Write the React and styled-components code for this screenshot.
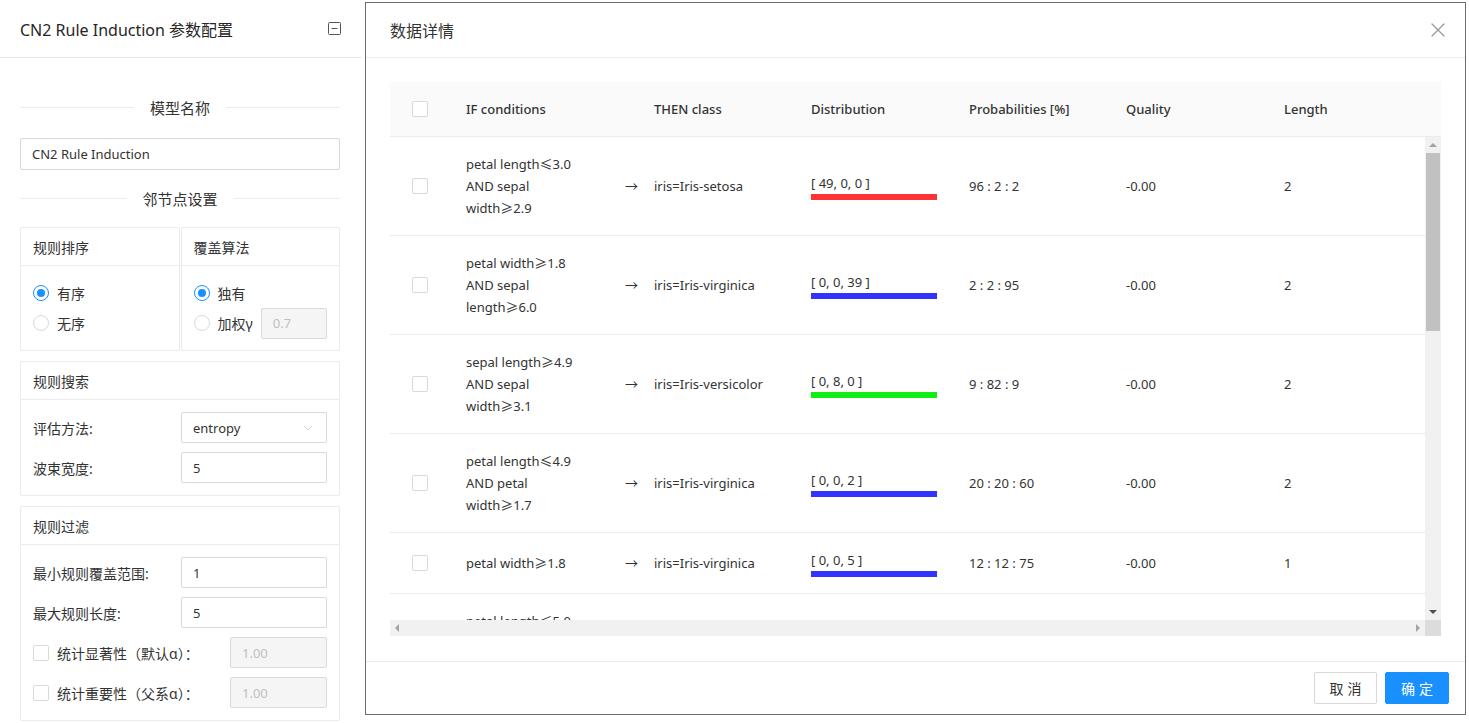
import React from "react";
import styled, { createGlobalStyle } from "styled-components";
import { ChevronDown, X } from "lucide-react";

const Global = createGlobalStyle`
  html, body { margin: 0; padding: 0; background: #fff; }
  body {
    font-family: "Noto Sans", "Noto Sans CJK SC", sans-serif;
    color: #333;
    font-size: 14px;
  }
  * { box-sizing: border-box; }
`;

const Page = styled.div`
  display: flex;
  align-items: flex-start;
  width: 1469px;
  height: 723px;
  overflow: hidden;
`;

/* ---------- left side panel ---------- */

const Side = styled.aside`
  width: 361px;
  flex-shrink: 0;
`;

const SideHeader = styled.div`
  height: 58px;
  padding: 0 20px;
  display: flex;
  align-items: center;
  justify-content: space-between;
  border-bottom: 1px solid #e8e8e8;
  font-size: 16px;
  color: #262626;
`;

const SideBody = styled.div`
  padding: 38px 20px 0 20px;
  width: 360px;
`;

const Divider = styled.div`
  display: flex;
  align-items: center;
  height: 22px;
  font-size: 15px;
  color: #333;
  margin-bottom: ${(p) => p.$mb || 0}px;
  &::before, &::after {
    content: "";
    flex: 1;
    border-top: 1px solid #ececec;
  }
  span { padding: 0 16px; }
`;

const Input = styled.div`
  height: ${(p) => p.$h || 32}px;
  width: ${(p) => (p.$w ? p.$w + "px" : "100%")};
  border: 1px solid #d9d9d9;
  border-radius: 2px;
  display: flex;
  align-items: center;
  justify-content: space-between;
  padding: 0 11px;
  font-size: 13px;
  color: ${(p) => (p.$disabled ? "#bfbfbf" : "#333")};
  background: ${(p) => (p.$disabled ? "#f5f5f5" : "#fff")};
  flex-shrink: 0;
  margin-bottom: ${(p) => p.$mb || 0}px;
`;

const CardPair = styled.div`
  display: flex;
  gap: 1px;
  margin-bottom: 10px;
`;

const Card = styled.div`
  flex: 1;
  border: 1px solid #ebebeb;
  border-radius: 2px;
  margin-bottom: ${(p) => p.$mb || 0}px;
`;

const CardHead = styled.div`
  height: 38px;
  padding: 0 12px;
  display: flex;
  align-items: center;
  border-bottom: 1px solid #ebebeb;
  font-size: 14px;
  color: #333;
`;

const CardBody = styled.div`
  padding: 12px;
  display: flex;
  flex-direction: column;
  gap: ${(p) => p.$gap || 0}px;
`;

const OptRow = styled.div`
  height: 30px;
  display: flex;
  align-items: center;
  font-size: 14px;
  gap: 8px;
`;

const Radio = styled.span`
  width: 16px;
  height: 16px;
  border-radius: 50%;
  border: 1px solid ${(p) => (p.$on ? "#1890ff" : "#d9d9d9")};
  display: inline-flex;
  align-items: center;
  justify-content: center;
  flex-shrink: 0;
  &::after {
    content: "";
    width: 8px;
    height: 8px;
    border-radius: 50%;
    background: ${(p) => (p.$on ? "#1890ff" : "transparent")};
  }
`;

const Check = styled.span`
  width: 16px;
  height: 16px;
  border: 1px solid #d9d9d9;
  border-radius: 2px;
  background: #fff;
  display: inline-block;
  flex-shrink: 0;
`;

const FormRow = styled.div`
  display: flex;
  align-items: center;
  justify-content: space-between;
  font-size: 14px;
`;

const CheckLabel = styled.div`
  display: flex;
  align-items: center;
  gap: 8px;
`;

/* ---------- modal ---------- */

const Modal = styled.section`
  margin: 2px 0 0 4px;
  width: 1101px;
  height: 713px;
  border: 1px solid #6b6b6b;
  background: #fff;
  display: flex;
  flex-direction: column;
`;

const ModalHead = styled.div`
  height: 55px;
  padding: 0 15px 0 24px;
  display: flex;
  align-items: center;
  justify-content: space-between;
  border-bottom: 1px solid #ebebeb;
  font-size: 16px;
  color: #333;
  span { margin-top: -1px; }
`;

const ModalBody = styled.div`
  padding: 24px 23px 24px 24px;
  flex: 1;
`;

const ModalFoot = styled.div`
  border-top: 1px solid #ebebeb;
  padding: 10px 16px;
  display: flex;
  justify-content: flex-end;
  gap: 8px;
`;

const Button = styled.button`
  height: 32px;
  width: ${(p) => p.$w}px;
  border-radius: 2px;
  font-family: inherit;
  font-size: 14px;
  letter-spacing: 4px;
  padding: 0 0 0 4px;
  border: 1px solid ${(p) => (p.$primary ? "#1890ff" : "#d9d9d9")};
  background: ${(p) => (p.$primary ? "#1890ff" : "#fff")};
  color: ${(p) => (p.$primary ? "#fff" : "#333")};
`;

const COLS = "60px 164px 24px 157px 158px 157px 158px 157px";

const Table = styled.div`
  width: 1051px;
`;

const HeadRow = styled.div`
  display: grid;
  grid-template-columns: ${COLS} 16px;
  height: 55px;
  background: #fafafa;
  border-bottom: 1px solid #ebebeb;
  font-size: 13px;
  font-weight: 500;
  color: #333;
`;

const Cell = styled.div`
  display: flex;
  align-items: center;
  justify-content: ${(p) => (p.$center ? "center" : "flex-start")};
  padding: ${(p) => (p.$center ? "0" : p.$pad || "0 16px")};
  line-height: 22px;
`;

const ScrollGrid = styled.div`
  display: grid;
  grid-template-columns: 1035px 16px;
  grid-template-rows: 483px 16px;
`;

const Viewport = styled.div`
  overflow: hidden;
`;

const Row = styled.div`
  display: grid;
  grid-template-columns: ${COLS};
  padding: 16px 0;
  border-bottom: 1px solid #ebebeb;
  font-size: 13px;
  color: #333;
`;

const Lines = styled.div`
  display: flex;
  flex-direction: column;
`;

const Dist = styled.div`
  display: flex;
  flex-direction: column;
  width: 126px;
  span { line-height: 22px; }
  i {
    display: block;
    height: 6px;
    background: ${(p) => p.$color};
  }
`;

const VBar = styled.div`
  background: #f1f1f1;
  display: flex;
  flex-direction: column;
`;

const HBar = styled.div`
  background: #f1f1f1;
  display: flex;
  justify-content: space-between;
  align-items: center;
  padding: 0 5px;
`;

const Corner = styled.div`
  background: #dcdcdc;
`;

const ArrowBtn = styled.div`
  height: 16px;
  display: flex;
  align-items: center;
  justify-content: center;
  &::after {
    content: "";
    width: 0;
    height: 0;
    border-left: 4px solid transparent;
    border-right: 4px solid transparent;
    ${(p) => (p.$dir === "up" ? "border-bottom: 4px solid #a3a3a3;" : "border-top: 4px solid #505050;")}
  }
`;

const HArrow = styled.span`
  width: 0;
  height: 0;
  border-top: 4px solid transparent;
  border-bottom: 4px solid transparent;
  ${(p) => (p.$dir === "left" ? "border-right: 4px solid #a3a3a3;" : "border-left: 4px solid #a3a3a3;")}
`;

const Thumb = styled.div`
  height: 178px;
  margin: 0 1px;
  background: #c1c1c1;
`;

const Spacer = styled.div`
  flex: 1;
`;

const rules = [
  { cond: ["petal length≤3.0", "AND sepal", "width≥2.9"], cls: "iris=Iris-setosa", dist: "[ 49, 0, 0 ]", color: "#ff3333", prob: "96 : 2 : 2", q: "-0.00", len: "2" },
  { cond: ["petal width≥1.8", "AND sepal", "length≥6.0"], cls: "iris=Iris-virginica", dist: "[ 0, 0, 39 ]", color: "#3333ff", prob: "2 : 2 : 95", q: "-0.00", len: "2" },
  { cond: ["sepal length≥4.9", "AND sepal", "width≥3.1"], cls: "iris=Iris-versicolor", dist: "[ 0, 8, 0 ]", color: "#11ee11", prob: "9 : 82 : 9", q: "-0.00", len: "2" },
  { cond: ["petal length≤4.9", "AND petal", "width≥1.7"], cls: "iris=Iris-virginica", dist: "[ 0, 0, 2 ]", color: "#3333ff", prob: "20 : 20 : 60", q: "-0.00", len: "2" },
  { cond: ["petal width≥1.8"], cls: "iris=Iris-virginica", dist: "[ 0, 0, 5 ]", color: "#3333ff", prob: "12 : 12 : 75", q: "-0.00", len: "1" },
  { cond: ["petal length≤5.0", "AND sepal", "width≥2.2"], cls: "iris=Iris-versicolor", dist: "[ 0, 37, 1 ]", color: "#11ee11", prob: "3 : 93 : 5", q: "-0.00", len: "2" },
];

const MinusSquare = () => (
  <svg width="13" height="13" viewBox="0 0 13 13">
    <rect x="0.5" y="0.5" width="12" height="12" rx="1" fill="none" stroke="#555" />
    <path d="M3.5 6.5h6" stroke="#555" />
  </svg>
);

export default function App() {
  return (
    <Page>
      <Global />
      <Side>
        <SideHeader>
          <span>CN2 Rule Induction 参数配置</span>
          <MinusSquare />
        </SideHeader>
        <SideBody>
          <Divider $mb={20}><span>模型名称</span></Divider>
          <Input $mb={17}>CN2 Rule Induction</Input>
          <Divider $mb={18}><span>邻节点设置</span></Divider>
          <CardPair>
            <Card>
              <CardHead>规则排序</CardHead>
              <CardBody>
                <OptRow><Radio $on />有序</OptRow>
                <OptRow><Radio />无序</OptRow>
              </CardBody>
            </Card>
            <Card>
              <CardHead>覆盖算法</CardHead>
              <CardBody>
                <OptRow><Radio $on />独有</OptRow>
                <OptRow><Radio />加权γ<Input $w={66} $h={31} $disabled>0.7</Input></OptRow>
              </CardBody>
            </Card>
          </CardPair>
          <Card $mb={10}>
            <CardHead>规则搜索</CardHead>
            <CardBody $gap={9}>
              <FormRow>
                <span>评估方法:</span>
                <Input $w={146} $h={31}>entropy<ChevronDown size={14} strokeWidth={1.3} color="#bfbfbf" /></Input>
              </FormRow>
              <FormRow>
                <span>波束宽度:</span>
                <Input $w={146} $h={31}>5</Input>
              </FormRow>
            </CardBody>
          </Card>
          <Card>
            <CardHead>规则过滤</CardHead>
            <CardBody $gap={9}>
              <FormRow>
                <span>最小规则覆盖范围:</span>
                <Input $w={146} $h={31}>1</Input>
              </FormRow>
              <FormRow>
                <span>最大规则长度:</span>
                <Input $w={146} $h={31}>5</Input>
              </FormRow>
              <FormRow>
                <CheckLabel><Check />统计显著性（默认α）：</CheckLabel>
                <Input $w={97} $h={31} $disabled>1.00</Input>
              </FormRow>
              <FormRow>
                <CheckLabel><Check />统计重要性（父系α）：</CheckLabel>
                <Input $w={97} $h={31} $disabled>1.00</Input>
              </FormRow>
            </CardBody>
          </Card>
        </SideBody>
      </Side>

      <Modal>
        <ModalHead>
          <span>数据详情</span>
          <X size={24} strokeWidth={1.2} color="#999" />
        </ModalHead>
        <ModalBody>
          <Table>
            <HeadRow>
              <Cell $center><Check /></Cell>
              <Cell>IF conditions</Cell>
              <Cell />
              <Cell>THEN class</Cell>
              <Cell>Distribution</Cell>
              <Cell>Probabilities [%]</Cell>
              <Cell>Quality</Cell>
              <Cell>Length</Cell>
              <Cell />
            </HeadRow>
            <ScrollGrid>
              <Viewport>
                {rules.map((r, i) => (
                  <Row key={i}>
                    <Cell $center><Check /></Cell>
                    <Cell>
                      <Lines>{r.cond.map((c) => <span key={c}>{c}</span>)}</Lines>
                    </Cell>
                    <Cell $pad="0 0 0 11px">→</Cell>
                    <Cell>{r.cls}</Cell>
                    <Cell>
                      <Dist $color={r.color}><span>{r.dist}</span><i /></Dist>
                    </Cell>
                    <Cell>{r.prob}</Cell>
                    <Cell>{r.q}</Cell>
                    <Cell>{r.len}</Cell>
                  </Row>
                ))}
              </Viewport>
              <VBar>
                <ArrowBtn $dir="up" />
                <Thumb />
                <Spacer />
                <ArrowBtn $dir="down" />
              </VBar>
              <HBar>
                <HArrow $dir="left" />
                <HArrow $dir="right" />
              </HBar>
              <Corner />
            </ScrollGrid>
          </Table>
        </ModalBody>
        <ModalFoot>
          <Button $w={63}>取消</Button>
          <Button $w={64} $primary>确定</Button>
        </ModalFoot>
      </Modal>
    </Page>
  );
}
